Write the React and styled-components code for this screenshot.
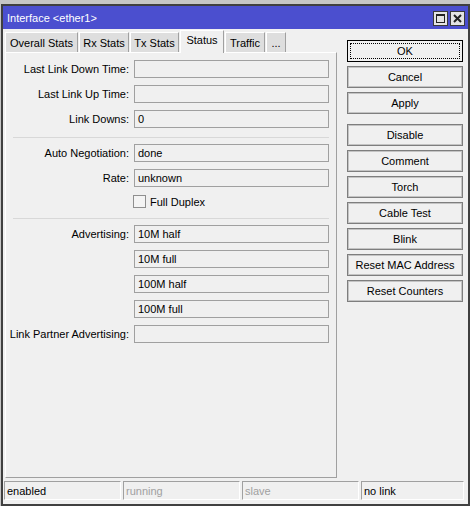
import React from "react";
import styled, { createGlobalStyle } from "styled-components";

const Global = createGlobalStyle`
  html, body { margin: 0; padding: 0; }
  body {
    background: #c6c6c6;
    font-family: "Liberation Sans", Arial, sans-serif;
    font-size: 11px;
    color: #000;
  }
`;

const Window = styled.div`
  margin: 4px 0 0 1px;
  width: 465px;
  height: 498px;
  border: 2px solid #404040;
  background: #f0f0f0;
  display: flex;
  flex-direction: column;
`;

const TitleBar = styled.div`
  height: 23px;
  background: #4b4fcf;
  color: #fff;
  display: flex;
  align-items: center;
  padding: 0 3px 0 4px;
  flex-shrink: 0;
`;

const TitleText = styled.div`
  flex: 1;
  font-size: 11px;
  padding-top: 1px;
`;

const TitleBtn = styled.div`
  width: 13px;
  height: 13px;
  margin-left: 2px;
  margin-top: 1px;
  border: 1px solid #3a3a3a;
  background: #e4e4e4;
  display: flex;
  align-items: center;
  justify-content: center;
`;

const Body = styled.div`
  display: flex;
  padding: 1px 0 0 2px;
  flex: 1;
  min-height: 0;
`;

const LeftPane = styled.div`
  width: 332px;
  display: flex;
  flex-direction: column;
`;

const TabRow = styled.div`
  display: flex;
  align-items: flex-end;
  gap: 1px;
  height: 22px;
  position: relative;
  z-index: 1;
`;

const Tab = styled.div`
  box-sizing: border-box;
  width: ${(p) => p.$w}px;
  height: ${(p) => (p.$active ? 23 : 20)}px;
  margin-bottom: ${(p) => (p.$active ? -1 : 0)}px;
  background: ${(p) => (p.$active ? "#f0f0f0" : "#dedede")};
  border-top: 1px solid #fff;
  border-left: 1px solid #fff;
  border-right: 1px solid #a0a0a0;
  display: flex;
  align-items: ${(p) => (p.$active ? "flex-start" : "center")};
  padding-top: ${(p) => (p.$active ? 3 : 1)}px;
  justify-content: center;
  white-space: nowrap;
`;

const Panel = styled.div`
  box-sizing: border-box;
  height: 426px;
  border-top: 1px solid #fff;
  border-left: 1px solid #fff;
  border-right: 1px solid #a0a0a0;
  border-bottom: 1px solid #a0a0a0;
  padding-top: 7px;
  display: flex;
  flex-direction: column;
`;

const Section = styled.div`
  display: flex;
  flex-direction: column;
  gap: 7px;
`;

const Row = styled.div`
  display: grid;
  grid-template-columns: 123px 195px;
  column-gap: 5px;
  align-items: center;
  height: ${(p) => p.$h || 18}px;
`;

const Label = styled.div`
  text-align: right;
  white-space: nowrap;
`;

const Field = styled.div`
  box-sizing: border-box;
  height: 18px;
  border: 1px solid #a0a0a0;
  background: #f0f0f0;
  padding: 0 3px;
  display: flex;
  align-items: center;
  white-space: nowrap;
`;

const Separator = styled.div`
  margin: 9px 0 6px 7px;
  width: 316px;
  height: 1px;
  background: #d8d8d8;
  flex-shrink: 0;
`;

const CheckWrap = styled.label`
  display: flex;
  align-items: center;
  gap: 4px;
  margin-left: -1px;
`;

const Box = styled.span`
  box-sizing: border-box;
  width: 13px;
  height: 13px;
  border: 1px solid #8f8f8f;
  background: #f4f4f4;
  display: inline-block;
`;

const ButtonCol = styled.div`
  margin: 10px 0 0 10px;
  width: 116px;
  display: flex;
  flex-direction: column;
  gap: 4px;
`;

const Button = styled.div`
  box-sizing: border-box;
  height: 22px;
  border: 1px solid ${(p) => (p.$default ? "#000" : "#7e7e7e")};
  box-shadow: inset 0 0 0 1px ${(p) => (p.$default ? "#f0f0f0" : "#c4c4c4")};
  background: #f0f0f0;
  display: flex;
  align-items: center;
  justify-content: center;
  position: relative;
  margin-top: ${(p) => p.$mt || 0}px;
  white-space: nowrap;
`;

const Focus = styled.span`
  position: absolute;
  inset: 2px;
  border: 1px dotted #000;
`;

const StatusBar = styled.div`
  display: grid;
  grid-template-columns: 117px 117px 117px 103px;
  column-gap: 2px;
  margin: 2px 0 4px 1px;
  height: 19px;
`;

const Cell = styled.div`
  box-sizing: border-box;
  border-top: 1px solid #a0a0a0;
  border-left: 1px solid #a0a0a0;
  border-right: 1px solid #fff;
  border-bottom: 1px solid #fff;
  padding: 1px 0 0 2px;
  display: flex;
  align-items: center;
  color: ${(p) => (p.$dim ? "#a0a0a0" : "#000")};
`;

const tabs = [
  ["Overall Stats", 73],
  ["Rx Stats", 50],
  ["Tx Stats", 49],
  ["Status", 44, true],
  ["Traffic", 40],
  ["...", 20],
];

const buttons = [
  ["OK", 0, true],
  ["Cancel"],
  ["Apply"],
  ["Disable", 6],
  ["Comment"],
  ["Torch"],
  ["Cable Test"],
  ["Blink"],
  ["Reset MAC Address"],
  ["Reset Counters"],
];

export default function App() {
  return (
    <>
      <Global />
      <Window>
        <TitleBar>
          <TitleText>Interface &lt;ether1&gt;</TitleText>
          <TitleBtn>
            <svg width="9" height="9" viewBox="0 0 9 9">
              <rect x="0.5" y="0.5" width="8" height="8" fill="none" stroke="#222" />
              <rect x="0" y="0" width="9" height="2" fill="#222" />
            </svg>
          </TitleBtn>
          <TitleBtn>
            <svg width="9" height="9" viewBox="0 0 9 9">
              <path d="M1 1 L8 8 M8 1 L1 8" stroke="#222" strokeWidth="2" />
            </svg>
          </TitleBtn>
        </TitleBar>
        <Body>
          <LeftPane>
            <TabRow>
              {tabs.map(([t, w, a]) => (
                <Tab key={t} $w={w} $active={a}>
                  {t}
                </Tab>
              ))}
            </TabRow>
            <Panel>
              <Section>
                <Row>
                  <Label>Last Link Down Time:</Label>
                  <Field />
                </Row>
                <Row>
                  <Label>Last Link Up Time:</Label>
                  <Field />
                </Row>
                <Row>
                  <Label>Link Downs:</Label>
                  <Field>0</Field>
                </Row>
              </Section>
              <Separator />
              <Section>
                <Row>
                  <Label>Auto Negotiation:</Label>
                  <Field>done</Field>
                </Row>
                <Row>
                  <Label>Rate:</Label>
                  <Field>unknown</Field>
                </Row>
                <Row $h={15}>
                  <span />
                  <CheckWrap>
                    <Box />
                    Full Duplex
                  </CheckWrap>
                </Row>
              </Section>
              <Separator />
              <Section>
                <Row>
                  <Label>Advertising:</Label>
                  <Field>10M half</Field>
                </Row>
                <Row>
                  <span />
                  <Field>10M full</Field>
                </Row>
                <Row>
                  <span />
                  <Field>100M half</Field>
                </Row>
                <Row>
                  <span />
                  <Field>100M full</Field>
                </Row>
                <Row>
                  <Label>Link Partner Advertising:</Label>
                  <Field />
                </Row>
              </Section>
            </Panel>
          </LeftPane>
          <ButtonCol>
            {buttons.map(([t, mt, d]) => (
              <Button key={t} $mt={mt} $default={d}>
                {d && <Focus />}
                {t}
              </Button>
            ))}
          </ButtonCol>
        </Body>
        <StatusBar>
          <Cell>enabled</Cell>
          <Cell $dim>running</Cell>
          <Cell $dim>slave</Cell>
          <Cell>no link</Cell>
        </StatusBar>
      </Window>
    </>
  );
}
